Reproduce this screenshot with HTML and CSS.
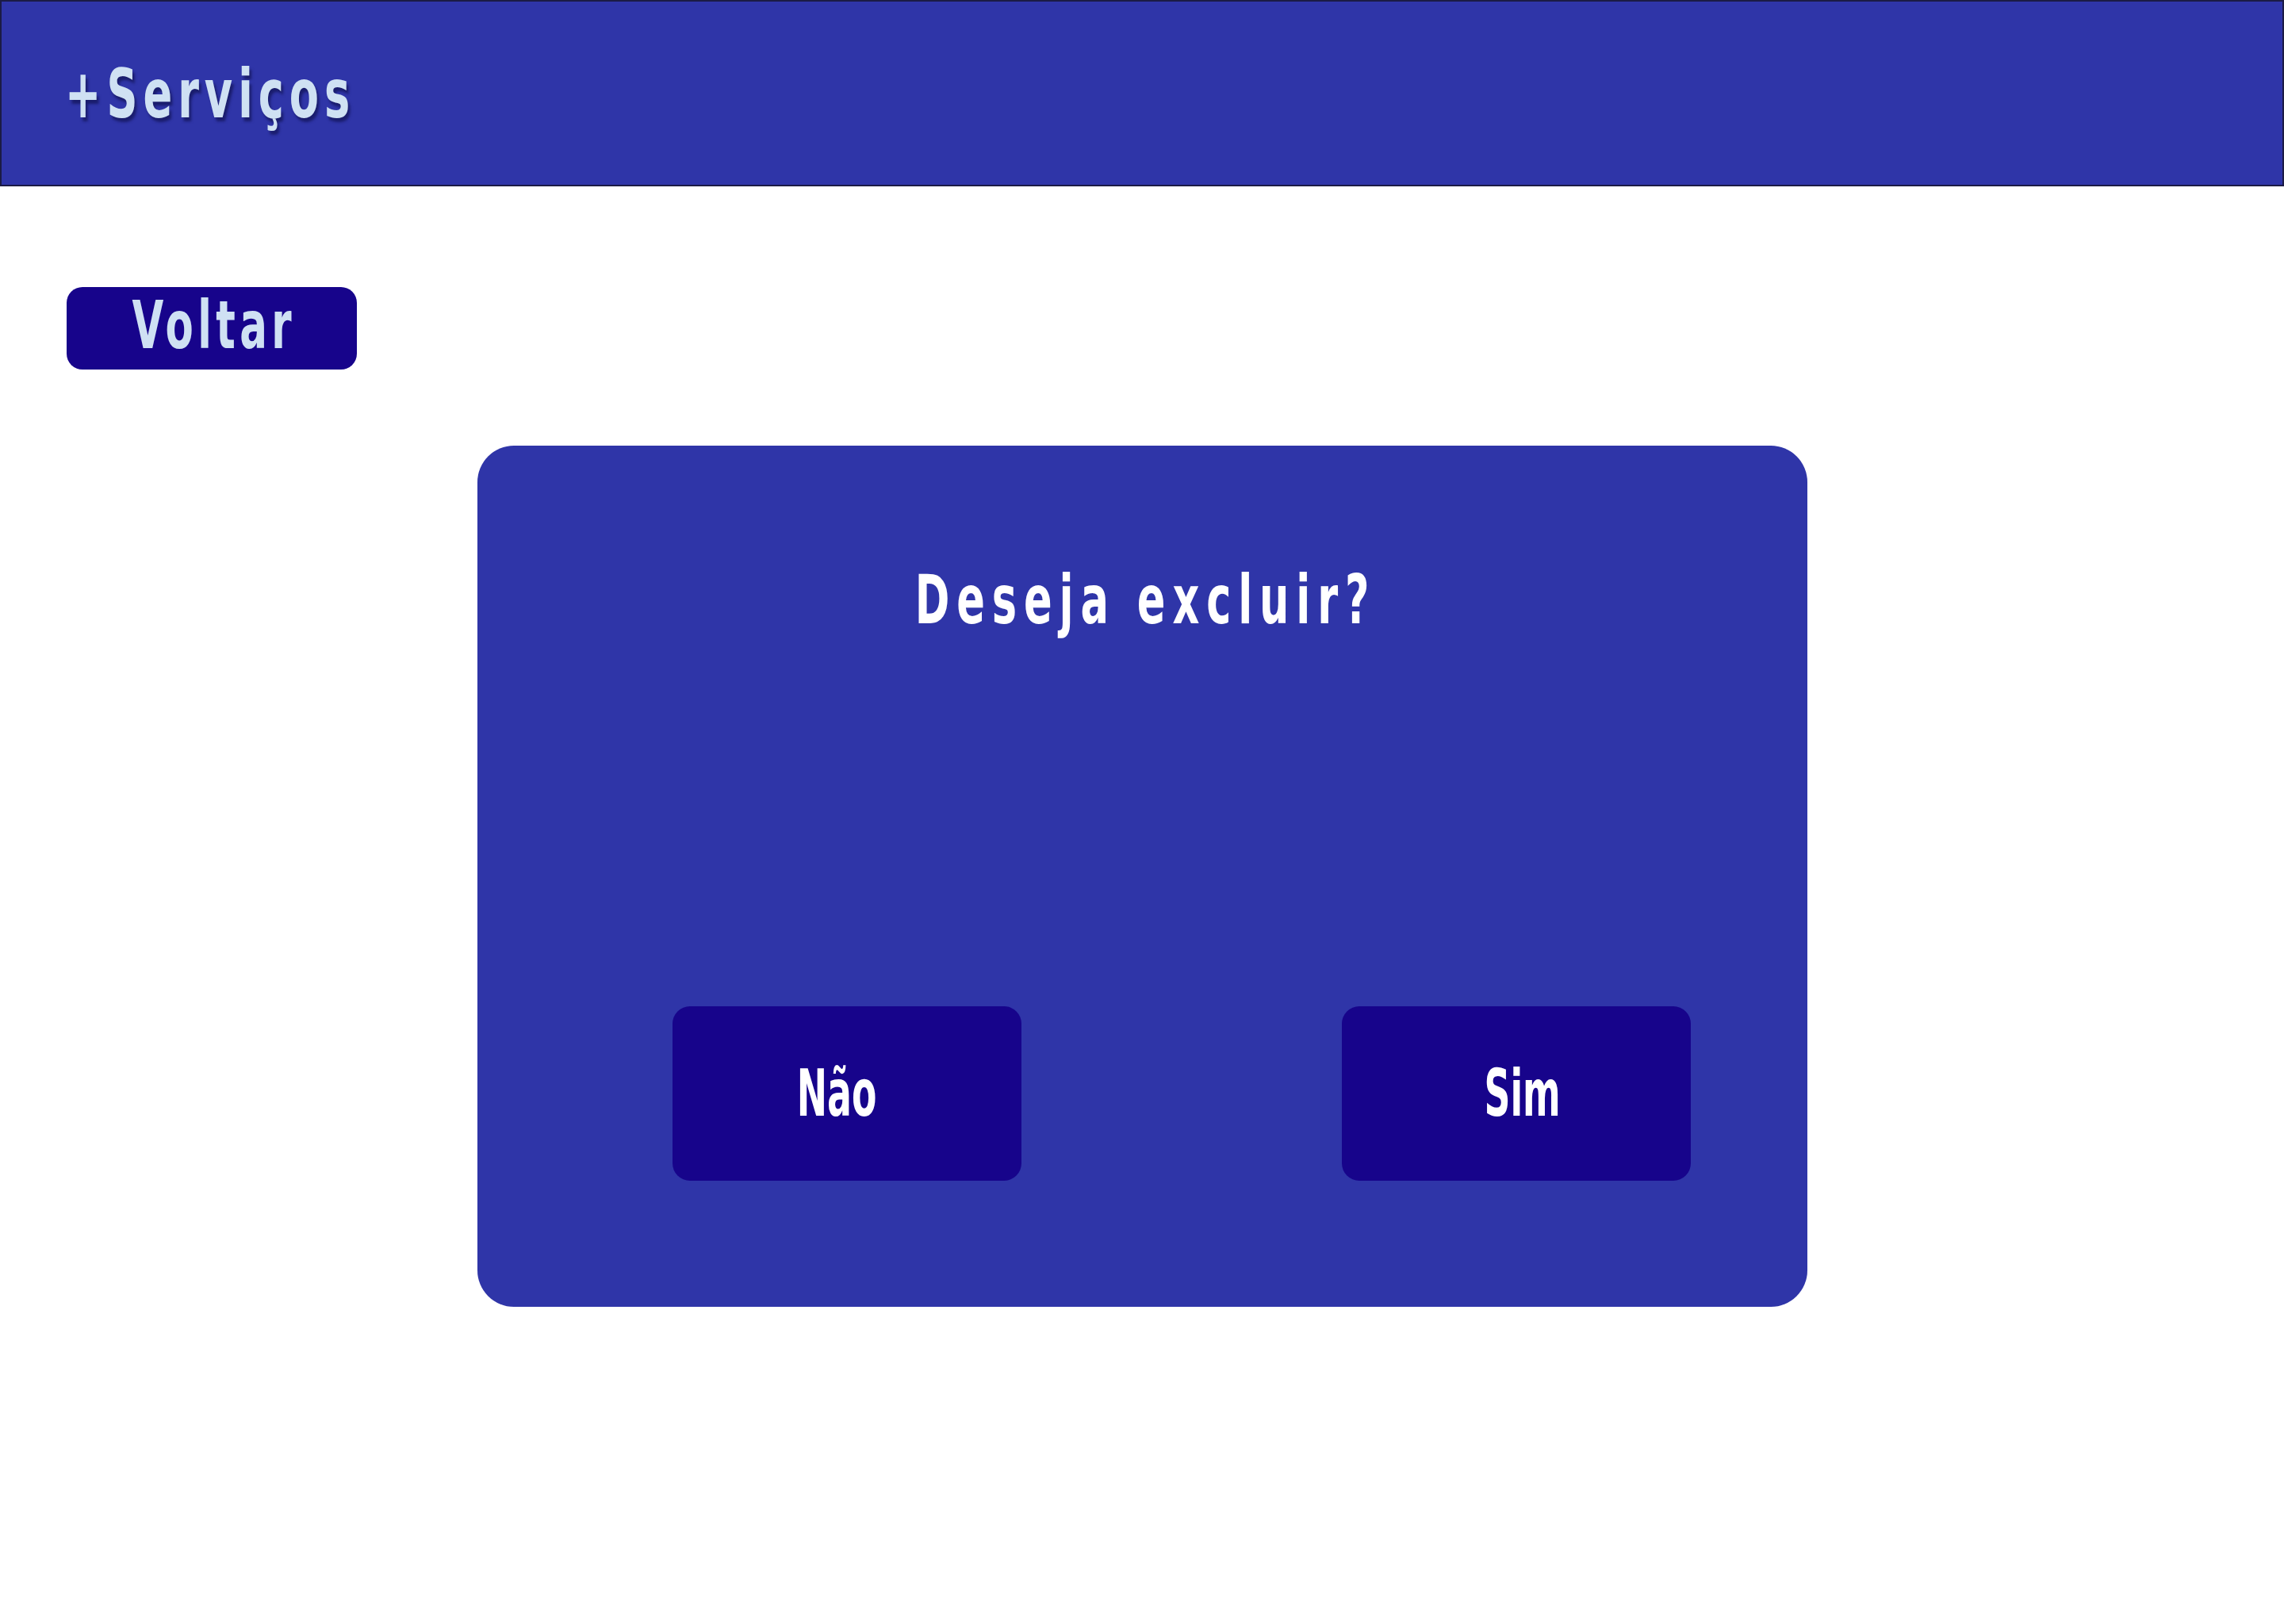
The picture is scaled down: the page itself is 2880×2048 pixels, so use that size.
FILE: index.html
```html
<!DOCTYPE html>
<html lang="pt-BR">
<head>
<meta charset="utf-8">
<title>+Serviços</title>
<link rel="stylesheet" href="styles.css">
</head>
<body>
<header class="topbar">
  <h1 class="brand"><span class="squeeze brand-text">+Serviços</span></h1>
</header>
<main class="page">
  <a class="back" href="#"><span class="squeeze back-text">Voltar</span></a>
  <section class="dialog">
    <h2 class="question"><span class="squeeze question-text">Deseja excluir?</span></h2>
    <div class="actions">
      <button class="choice choice-no" type="button"><span class="squeeze choice-text">Não</span></button>
      <button class="choice choice-yes" type="button"><span class="squeeze choice-text">Sim</span></button>
    </div>
  </section>
</main>
</body>
</html>
```
FILE: styles.css
```css
html, body {
  margin: 0;
  padding: 0;
  background: #ffffff;
}

body {
  width: 2880px;
  font-family: "DejaVu Sans Condensed", "DejaVu Sans", sans-serif;
  font-stretch: condensed;
  font-weight: 700;
}

.squeeze {
  display: inline-block;
  white-space: nowrap;
  line-height: 1;
}

.topbar {
  box-sizing: border-box;
  height: 235px;
  background: #2f35a8;
  border: 2px solid #1b1b45;
  display: flex;
  align-items: flex-start;
  padding-left: 80px;
}

.brand {
  margin: 73px 0 0 0;
  font-size: 86px;
  font-weight: 700;
  line-height: 1;
  color: #cfe1f3;
}

.brand-text {
  transform: scaleX(0.7);
  transform-origin: left center;
  letter-spacing: 10px;
  text-shadow: 4px 5px 4px rgba(10, 10, 60, 0.55);
}

.page {
  display: flex;
  flex-direction: column;
  align-items: flex-start;
  padding-left: 84px;
}

.back {
  margin-top: 127px;
  box-sizing: border-box;
  width: 366px;
  height: 104px;
  border-radius: 20px;
  background: #17048b;
  color: #cfe1f3;
  text-decoration: none;
  display: flex;
  align-items: center;
  justify-content: center;
  font-size: 84px;
  padding-bottom: 8px;
}

.back-text {
  transform: scaleX(0.68);
  letter-spacing: 8px;
  padding-left: 8px;
}

.dialog {
  margin-top: 96px;
  margin-left: 518px;
  box-sizing: border-box;
  width: 1677px;
  height: 1086px;
  border-radius: 46px;
  background: #2f35a8;
  display: flex;
  flex-direction: column;
  padding-bottom: 159px;
}

.question {
  margin: 151px 0 0 0;
  text-align: center;
  font-size: 86px;
  font-weight: 700;
  line-height: 1;
  color: #ffffff;
}

.question-text {
  transform: scaleX(0.68);
  letter-spacing: 13px;
  padding-left: 13px;
}

.actions {
  margin-top: auto;
  display: flex;
  gap: 404px;
  padding-left: 246px;
}

.choice {
  box-sizing: border-box;
  width: 440px;
  height: 220px;
  border: none;
  border-radius: 22px;
  background: #17048b;
  color: #ffffff;
  font-family: inherit;
  font-weight: 700;
  font-size: 82px;
  display: flex;
  align-items: center;
  justify-content: center;
  padding: 0;
}

.choice-no {
  padding-right: 26px;
}

.choice-yes {
  padding-left: 16px;
}

.choice-text {
  transform: scaleX(0.62);
}
```
